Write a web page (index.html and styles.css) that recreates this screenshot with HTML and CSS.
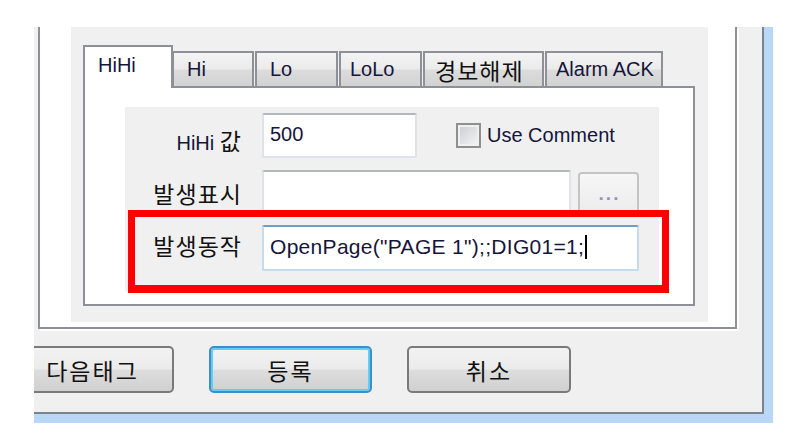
FILE: index.html
```html
<!DOCTYPE html>
<html>
<head>
    <meta charset="utf-8">
    <title>경보 설정</title>
    <link rel="stylesheet" href="styles.css">
</head>
<body>
    <div class="window">
        <div class="client">
            <div class="group">
                <div class="panel">
                    <div class="tab-container">
                        <div class="tab-titles">
                            <div class="tab-title active">HiHi</div>
                            <div class="tab-title tab-hi">Hi</div>
                            <div class="tab-title tab-lo">Lo</div>
                            <div class="tab-title tab-lolo">LoLo</div>
                            <div class="tab-title tab-clear ko">경보해제</div>
                            <div class="tab-title tab-ack">Alarm ACK</div>
                        </div>
                        <div class="tab-content">
                            <div class="fields">
                                <div class="row row-value">
                                    <div class="label">HiHi <span class="ko">값</span></div>
                                    <div class="edit edit-value">500</div>
                                    <div class="check">
                                        <span class="check-box"></span>
                                        <span class="check-text">Use Comment</span>
                                    </div>
                                </div>
                                <div class="row row-show">
                                    <div class="label ko">발생표시</div>
                                    <div class="edit edit-show"></div>
                                    <div class="browse">...</div>
                                </div>
                                <div class="row row-action">
                                    <div class="label ko">발생동작</div>
                                    <div class="edit edit-action focused">OpenPage("PAGE 1");;DIG01=1;<span class="caret"></span></div>
                                </div>
                                <div class="highlight"></div>
                            </div>
                        </div>
                    </div>
                </div>
            </div>

            <div class="buttons">
                <div class="button btn-next ko">다음태그</div>
                <div class="button default ko">등록</div>
                <div class="button ko">취소</div>
            </div>
        </div>
    </div>
</body>
</html>
```

FILE: styles.css
```css
body {
    margin: 0;
    padding: 0;
    height: 444px;
    overflow: hidden;
    background-color: #fff;
    font-family: "Liberation Sans", "Noto Sans CJK KR", sans-serif;
    font-size: 20px;
    color: #15153a;
}

.ko {
    font-family: "Noto Sans CJK KR", sans-serif;
    font-size: 23px;
    letter-spacing: 1px;
    color: #111;
}

/* window frame (cropped at top and left) */
.window {
    margin: 27px 0 0 34px;
    width: 739px;
    height: 396px;
    box-sizing: border-box;
    border-right: 9px solid #b9d7f6;
    border-bottom: 9px solid #b9d7f6;
}

.client {
    height: 100%;
    box-sizing: border-box;
    background-color: #f0f0f0;
    border-right: 2px solid #7b838d;
    border-bottom: 2px solid #7b838d;
    overflow: hidden;
}

.group {
    margin-left: 4px;
    width: 699px;
    box-sizing: border-box;
    background-color: #fff;
    border: 2px solid #8e9097;
    border-top: none;
    box-shadow: 2px 2px 0 #fff;
    padding: 0 27px 5px 31px;
}

.panel {
    background-color: #f0f0f0;
    padding: 18px 13px 16px 12px;
}

/* tabs */
.tab-titles {
    display: flex;
    align-items: flex-start;
    height: 43px;
    margin-bottom: -2px;
    position: relative;
    z-index: 1;
}

.tab-title {
    box-sizing: border-box;
    display: flex;
    align-items: center;
    height: 35px;
    margin-top: 6px;
    margin-left: 1px;
    padding-left: 13px;
    border: 2px solid #8e9097;
    border-bottom: none;
    background: linear-gradient(#f3f3f3 0%, #ebebeb 48%, #dcdcdc 52%, #d2d2d2 100%);
    white-space: nowrap;
}

.tab-title.active {
    position: relative;
    z-index: 2;
    width: 90px;
    height: 43px;
    margin: 0;
    padding-bottom: 5px;
    background: #fff;
}

.tab-hi { width: 82px; margin-left: -1px; }
.tab-lo { width: 83px; }
.tab-lolo { width: 83px; padding-left: 9px; }
.tab-clear { width: 121px; padding-left: 10px; letter-spacing: 1px; }
.tab-ack { width: 118px; padding-left: 9px; }

.tab-content {
    height: 220px;
    box-sizing: border-box;
    border: 2px solid #8e9097;
    background-color: #fff;
    padding: 19px 0 0 40px;
}

/* field area */
.fields {
    position: relative;
    width: 534px;
    height: 184px;
    box-sizing: border-box;
    background-color: #f0f0f0;
    padding-top: 6px;
}

.row {
    display: flex;
    align-items: center;
}

.row-show {
    margin-top: 12px;
}

.row-action {
    margin-top: 10px;
}

.label {
    width: 117px;
    margin-right: 20px;
    text-align: right;
    white-space: nowrap;
}

.row-value .label {
    padding-top: 8px;
}

.row-action .label {
    margin-top: -6px;
}

.edit {
    box-sizing: border-box;
    display: flex;
    align-items: center;
    height: 45px;
    padding-left: 6px;
    background-color: #fff;
    border: 2px solid #dfe2e8;
    border-top-color: #b3b6bd;
    border-radius: 2px;
    white-space: nowrap;
}

.edit-value {
    width: 155px;
    align-items: flex-start;
    padding-top: 8px;
}

.edit-show {
    width: 309px;
}

.edit-action {
    width: 377px;
    height: 46px;
    font-size: 21px;
    letter-spacing: 0.3px;
    padding-bottom: 3px;
}

.edit.focused {
    border-color: #c5dcef;
    border-top-color: #6e9fc9;
}

.caret {
    display: inline-block;
    width: 2px;
    height: 24px;
    margin-left: 1px;
    background-color: #000;
}

.check {
    display: flex;
    align-items: center;
    margin-left: 39px;
}

.check-box {
    box-sizing: border-box;
    width: 25px;
    height: 25px;
    border: 2px solid #8e8f8f;
    padding: 2px;
    background-color: #fff;
    background-clip: content-box;
    background-image: linear-gradient(135deg, #c9ccd2, #f6f6f6);
    margin-right: 6px;
}

.browse {
    box-sizing: border-box;
    align-self: flex-end;
    width: 61px;
    height: 43px;
    margin-left: 7px;
    border: 2px solid #c4c4c4;
    border-radius: 4px;
    background: linear-gradient(#f6f6f6, #ececec);
    color: #9a8fc0;
    font-size: 19px;
    font-weight: bold;
    letter-spacing: 2px;
    text-align: center;
    line-height: 40px;
    padding-left: 2px;
}

/* red box drawn over the screenshot */
.highlight {
    position: absolute;
    left: 3px;
    top: 103px;
    width: 541px;
    height: 83px;
    box-sizing: border-box;
    border: 7px solid #ff0000;
    border-bottom-width: 8px;
}

/* bottom buttons */
.buttons {
    display: flex;
    gap: 35px;
    margin-top: 17px;
}

.button {
    box-sizing: border-box;
    width: 163px;
    height: 47px;
    display: flex;
    align-items: center;
    justify-content: center;
    border: 2px solid #7a7a7a;
    border-radius: 5px;
    background: linear-gradient(#f2f2f2 0%, #ebebeb 48%, #dddddd 52%, #d0d0d0 100%);
    letter-spacing: 2px;
}

.btn-next {
    margin-left: -23px;
}

.button.default {
    border-color: #3d8ec9;
    box-shadow: inset 0 0 0 2px #62cdf4;
}

.button:last-child {
    width: 164px;
}
```
